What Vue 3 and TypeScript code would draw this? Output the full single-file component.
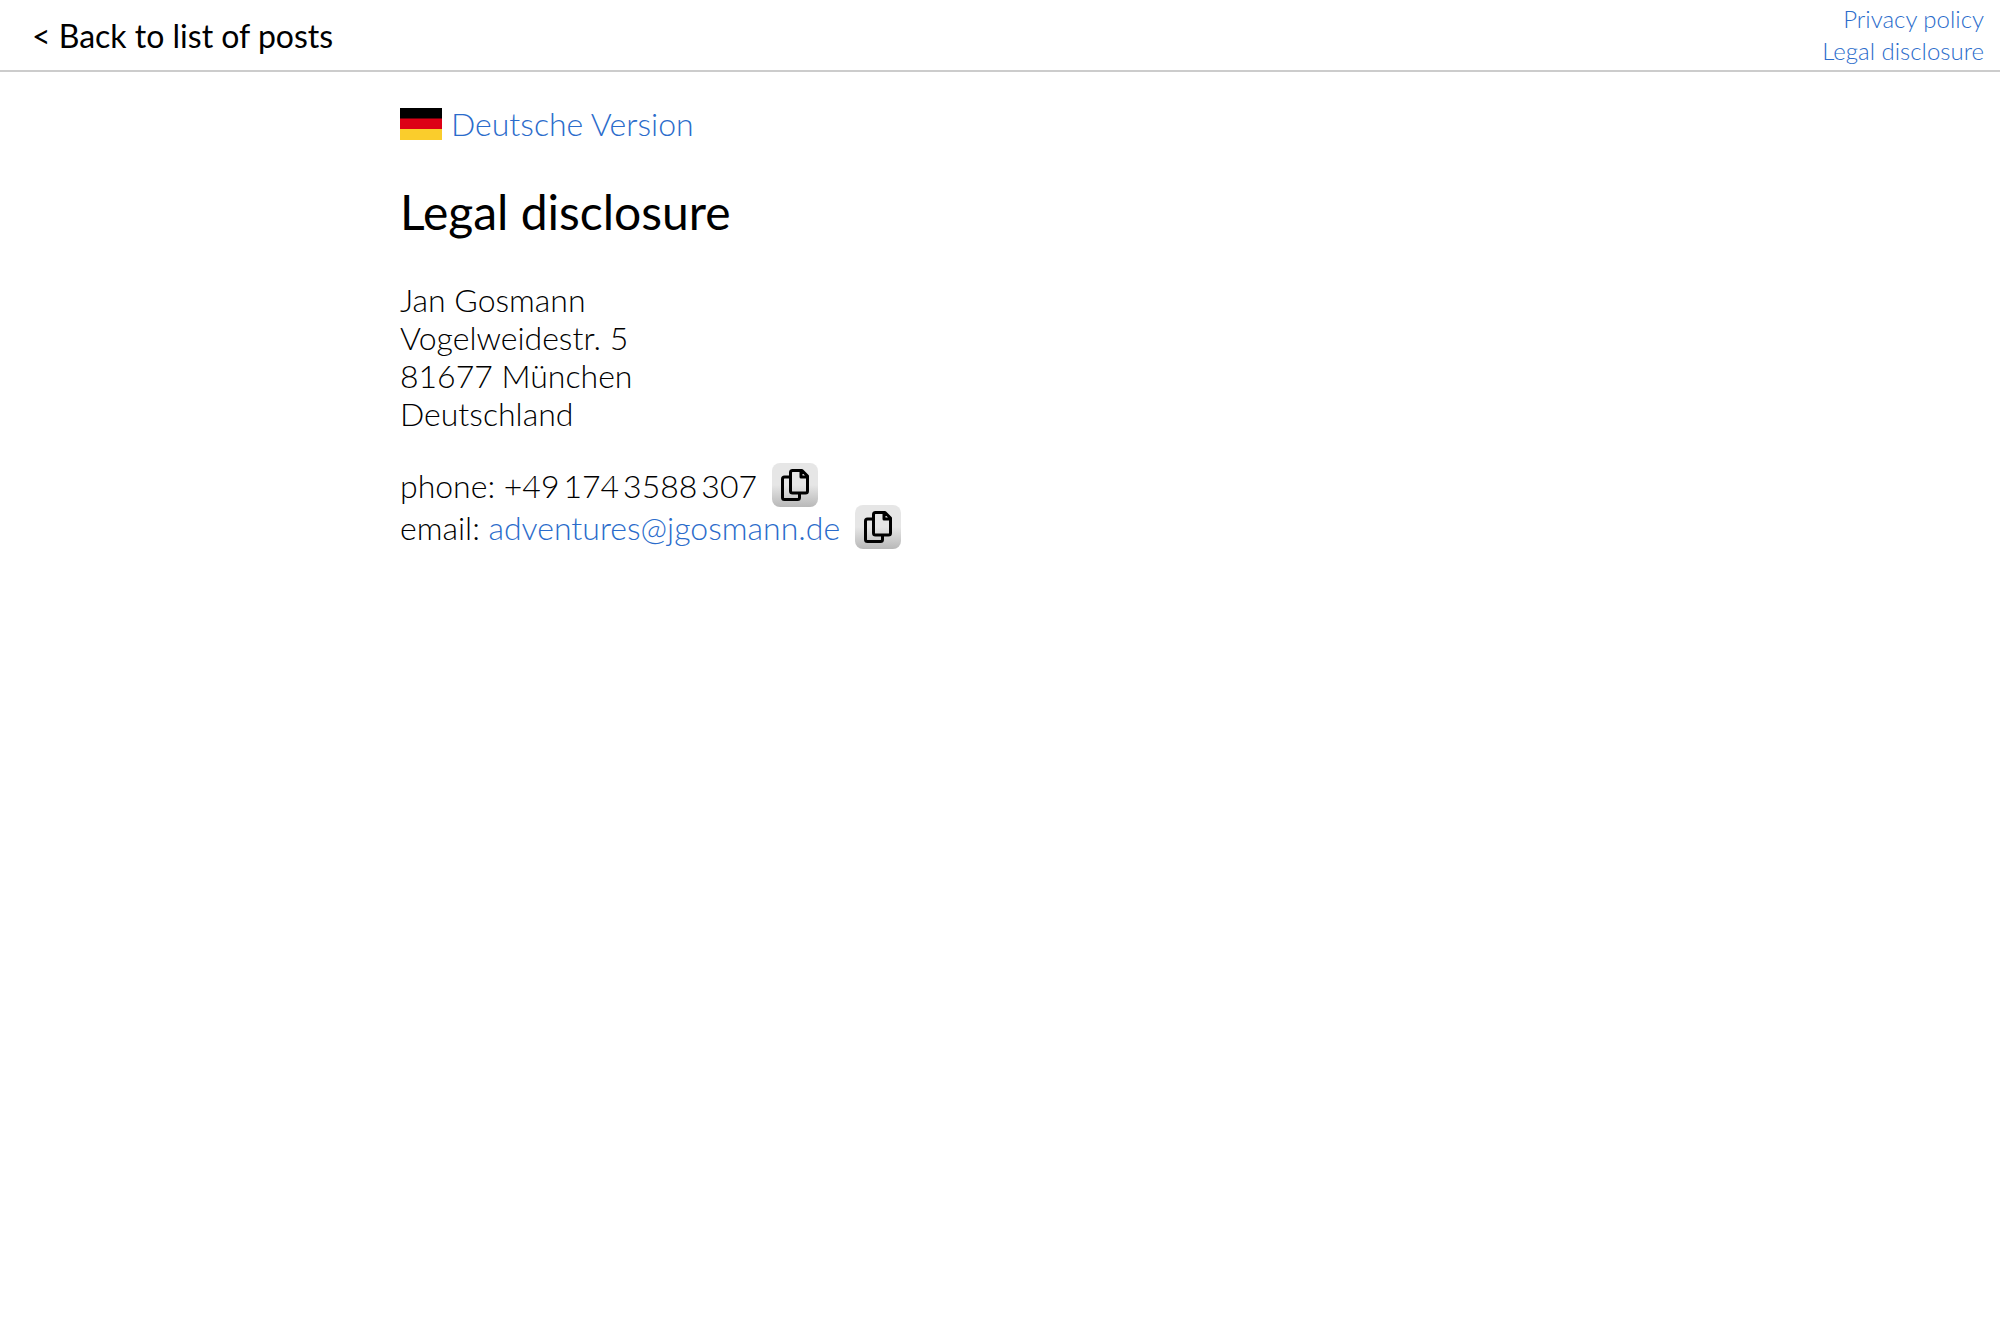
<script setup lang="ts">
import { ref } from 'vue'

const address: string[] = ['Jan Gosmann', 'Vogelweidestr. 5', '81677 München', 'Deutschland']
const copied = ref('')

function copy(text: string): void {
  copied.value = text
  navigator.clipboard?.writeText(text)
}
</script>

<template>
  <header class="bar">
    <a class="back" href="#posts">&lt; Back to list of posts</a>
    <nav class="legal">
      <a href="#privacy">Privacy policy</a>
      <a href="#legal">Legal disclosure</a>
    </nav>
  </header>
  <main class="content">
    <p class="language">
      <svg class="flag" viewBox="0 0 42 32" aria-hidden="true">
        <path fill="#000" d="M0 0h42v11H0z" />
        <path fill="#dd0016" d="M0 10.5h42V21H0z" />
        <path fill="#facd2c" d="M0 21h42v11H0z" />
      </svg>
      <a href="#de">Deutsche Version</a>
    </p>
    <h1>Legal disclosure</h1>
    <address>
      <div v-for="line in address" :key="line">{{ line }}</div>
    </address>
    <div class="contact">
      <span>phone: +49&#8201;174&#8201;3588&#8201;307</span>
      <button type="button" aria-label="Copy phone number" @click="copy('+491743588307')">
        <svg viewBox="0 0 28 32" aria-hidden="true">
          <path d="M11 1.5h10L26.500 7v15a2 2 0 0 1-2 2H11.500a2 2 0 0 1-2-2V3.500a2 2 0 0 1 2-2zM20 2v6h6M9 8H3.500a2 2 0 0 0-2 2v18.500a2 2 0 0 0 2 2h13a2 2 0 0 0 2-2V25" />
        </svg>
      </button>
    </div>
    <div class="contact">
      <span>email: <a href="mailto:adventures@jgosmann.de">adventures@jgosmann.de</a></span>
      <button type="button" aria-label="Copy email address" @click="copy('adventures@jgosmann.de')">
        <svg viewBox="0 0 28 32" aria-hidden="true">
          <path d="M11 1.5h10L26.500 7v15a2 2 0 0 1-2 2H11.500a2 2 0 0 1-2-2V3.500a2 2 0 0 1 2-2zM20 2v6h6M9 8H3.500a2 2 0 0 0-2 2v18.500a2 2 0 0 0 2 2h13a2 2 0 0 0 2-2V25" />
        </svg>
      </button>
    </div>
  </main>
</template>

<style>
body {
  margin: 0;
  background: #fff;
}
</style>

<style scoped>
.bar,
.content {
  font-family: Lato, sans-serif;
  font-weight: 300;
  font-size: 32px;
  color: #000;
}
a {
  color: #2b6ccb;
  text-decoration: none;
}
.bar {
  display: flex;
  justify-content: space-between;
  align-items: center;
  padding: 3px 16px 3px 32px;
  border-bottom: 2px solid #ccc;
}
.back {
  color: #000;
  font-weight: 400;
}
.legal {
  display: flex;
  flex-direction: column;
  text-align: right;
  font-size: 24px;
  line-height: 32px;
}
.content {
  width: 60%;
  margin: 33px auto;
  line-height: 38px;
}
.language {
  display: flex;
  align-items: center;
  gap: 9px;
  margin: 0;
}
.flag {
  width: 42px;
  height: 32px;
}
h1 {
  margin: 40px 0;
  font-size: 48px;
  line-height: 58px;
  font-weight: 400;
}
address {
  font-style: normal;
  margin-bottom: 30px;
}
.contact {
  display: flex;
  align-items: flex-start;
  gap: 15px;
  height: 42px;
  line-height: 46px;
}
button {
  width: 46px;
  height: 44px;
  padding: 0;
  border: 0;
  border-radius: 8px;
  background: linear-gradient(#e6e6e6 50%, #b8b8b8);
  display: flex;
  align-items: center;
  justify-content: center;
}
button svg {
  width: 28px;
  height: 32px;
  fill: none;
  stroke: #000;
  stroke-width: 3;
  stroke-linejoin: round;
}
</style>
